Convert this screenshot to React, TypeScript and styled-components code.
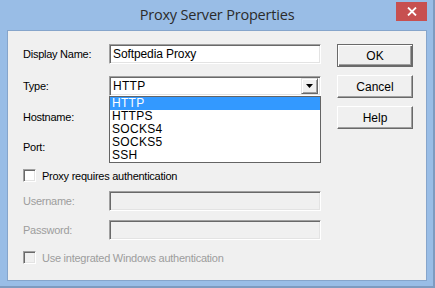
import React from 'react';
import styled, { createGlobalStyle, css } from 'styled-components';

const GlobalStyle = createGlobalStyle`
  html, body {
    margin: 0;
    padding: 0;
    background: #99bde6;
  }
`;

const Window = styled.div`
  width: 435px;
  height: 288px;
  box-sizing: border-box;
  background: #99bde6;
  border-right: 2px solid #7d9bc0;
  border-bottom: 2px solid #7d9bc0;
  display: flex;
  flex-direction: column;
  padding: 0 6px 5px 7px;
  font-family: "Liberation Sans", Arial, sans-serif;
`;

const TitleBar = styled.div`
  height: 30px;
  display: grid;
  grid-template-columns: 1fr auto 1fr;
  align-items: start;
`;

const Title = styled.div`
  grid-column: 2;
  font-family: "Open Sans", "Noto Sans", sans-serif;
  font-size: 14.5px;
  color: #2b2b2b;
  line-height: 30px;
  letter-spacing: -0.2px;
`;

const CloseButton = styled.div`
  grid-column: 3;
  justify-self: end;
  margin-top: 2px;
  width: 31px;
  height: 19px;
  background: #c75050;
  display: flex;
  align-items: center;
  justify-content: center;
`;

const Client = styled.div`
  flex: 1;
  background: #f0f0f0;
  border: 1px solid #86a5cb;
  display: flex;
  padding: 13px 12px 0 15px;
  font-size: 11px;
  letter-spacing: -0.25px;
  color: #000;
`;

const FormColumn = styled.div`
  width: 298px;
  display: flex;
  flex-direction: column;
`;

const Row = styled.div<{ $gap: number }>`
  display: flex;
  align-items: center;
  height: 20px;
  margin-bottom: ${p => p.$gap}px;
  position: relative;
`;

const Label = styled.div<{ $disabled?: boolean }>`
  width: 86px;
  color: ${p => (p.$disabled ? '#9d9d9d' : '#000')};
`;

const sunken = css`
  box-sizing: border-box;
  border-top: 1px solid #a0a0a0;
  border-left: 1px solid #a0a0a0;
  border-right: 1px solid #fff;
  border-bottom: 1px solid #fff;
  box-shadow: inset 1px 1px 0 #696969, inset -1px -1px 0 #e3e3e3;
`;

const TextField = styled.div<{ $disabled?: boolean }>`
  ${sunken};
  width: 212px;
  height: 20px;
  background: ${p => (p.$disabled ? '#f0f0f0' : '#fff')};
  font-size: 12px;
  letter-spacing: -0.1px;
  line-height: 18px;
  padding-left: 3px;
`;

const Combo = styled.div`
  ${sunken};
  width: 212px;
  height: 20px;
  background: #fff;
  display: flex;
  align-items: center;
  padding: 0 2px 0 3px;
  font-size: 12px;
  letter-spacing: 0.3px;
`;

const ComboText = styled.span`
  flex: 1;
`;

const ArrowButton = styled.div`
  width: 17px;
  height: 16px;
  box-sizing: border-box;
  background: #f0f0f0;
  border-top: 1px solid #e3e3e3;
  border-left: 1px solid #e3e3e3;
  border-right: 1px solid #696969;
  border-bottom: 1px solid #696969;
  box-shadow: inset 1px 1px 0 #fff, inset -1px -1px 0 #a0a0a0;
  display: flex;
  align-items: center;
  justify-content: center;
`;

const DropList = styled.div`
  position: absolute;
  left: 86px;
  top: 20px;
  width: 212px;
  box-sizing: border-box;
  border: 1px solid #646464;
  background: #fff;
  z-index: 2;
  font-size: 12px;
  letter-spacing: 0.3px;
`;

const ListItem = styled.div<{ $selected?: boolean }>`
  height: 13px;
  line-height: 13px;
  padding-left: 2px;
  background: ${p => (p.$selected ? '#3399ff' : 'transparent')};
  color: ${p => (p.$selected ? '#fff' : '#000')};
`;

const CheckRow = styled.label<{ $gap: number; $disabled?: boolean }>`
  display: flex;
  align-items: center;
  height: 13px;
  margin-bottom: ${p => p.$gap}px;
  color: ${p => (p.$disabled ? '#9d9d9d' : '#000')};
  gap: 6px;
`;

const CheckBox = styled.span<{ $disabled?: boolean }>`
  ${sunken};
  width: 13px;
  height: 13px;
  background: ${p => (p.$disabled ? '#f0f0f0' : '#fff')};
`;

const ButtonColumn = styled.div`
  margin-left: 16px;
  display: flex;
  flex-direction: column;
  gap: 8px;
`;

const Button = styled.div<{ $default?: boolean }>`
  width: 76px;
  height: 23px;
  box-sizing: border-box;
  background: #f0f0f0;
  display: flex;
  align-items: center;
  justify-content: center;
  font-size: 12px;
  letter-spacing: 0;
  border-top: 1px solid ${p => (p.$default ? '#6a6a6a' : '#fff')};
  border-left: 1px solid ${p => (p.$default ? '#6a6a6a' : '#fff')};
  border-right: 1px solid ${p => (p.$default ? '#6a6a6a' : '#696969')};
  border-bottom: 1px solid ${p => (p.$default ? '#6a6a6a' : '#696969')};
  box-shadow: ${p =>
    p.$default
      ? 'inset 1px 1px 0 #fff, inset -1px -1px 0 #696969, inset -2px -2px 0 #a0a0a0'
      : 'inset -1px -1px 0 #a0a0a0'};
`;

const types = ['HTTP', 'HTTPS', 'SOCKS4', 'SOCKS5', 'SSH'];

export default function App() {
  return (
    <>
      <GlobalStyle />
      <Window>
        <TitleBar>
          <Title>Proxy Server Properties</Title>
          <CloseButton>
            <svg width="10" height="9" viewBox="0 0 10 9">
              <path d="M1 0.5 L9 8.5 M9 0.5 L1 8.5" stroke="#fff" strokeWidth="1.8" />
            </svg>
          </CloseButton>
        </TitleBar>
        <Client>
          <FormColumn>
            <Row $gap={12}>
              <Label>Display Name:</Label>
              <TextField>Softpedia Proxy</TextField>
            </Row>
            <Row $gap={11}>
              <Label>Type:</Label>
              <Combo>
                <ComboText>HTTP</ComboText>
                <ArrowButton>
                  <svg width="7" height="4" viewBox="0 0 7 4">
                    <path d="M0 0 H7 L3.5 4 Z" fill="#000" />
                  </svg>
                </ArrowButton>
              </Combo>
              <DropList>
                {types.map((t, i) => (
                  <ListItem key={t} $selected={i === 0}>{t}</ListItem>
                ))}
              </DropList>
            </Row>
            <Row $gap={10}>
              <Label>Hostname:</Label>
              <TextField />
            </Row>
            <Row $gap={12}>
              <Label>Port:</Label>
              <TextField />
            </Row>
            <CheckRow $gap={9}>
              <CheckBox />
              Proxy requires authentication
            </CheckRow>
            <Row $gap={9}>
              <Label $disabled>Username:</Label>
              <TextField $disabled />
            </Row>
            <Row $gap={11}>
              <Label $disabled>Password:</Label>
              <TextField $disabled />
            </Row>
            <CheckRow $gap={0} $disabled>
              <CheckBox $disabled />
              Use integrated Windows authentication
            </CheckRow>
          </FormColumn>
          <ButtonColumn>
            <Button $default>OK</Button>
            <Button>Cancel</Button>
            <Button>Help</Button>
          </ButtonColumn>
        </Client>
      </Window>
    </>
  );
}
